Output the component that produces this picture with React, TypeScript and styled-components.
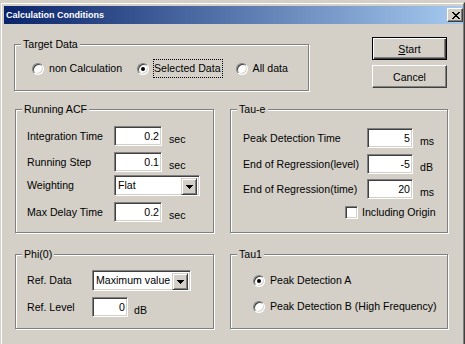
import React from "react";
import styled, { createGlobalStyle, css } from "styled-components";

const Global = createGlobalStyle`
  html, body {
    margin: 0;
    padding: 0;
    width: 465px;
    height: 344px;
    overflow: hidden;
    background: #d4d0c8;
  }
  body {
    font-family: "Liberation Sans", Arial, sans-serif;
    font-size: 10.6px;
    color: #000;
  }
`;

const Window = styled.div`
  box-sizing: border-box;
  margin-top: 2px;
  width: 465px;
  height: 342px;
  overflow: hidden;
  background: #d4d0c8;
  border-style: solid;
  border-width: 1px 1px 0 1px;
  border-color: #d4d0c8 #404040 #404040 #d4d0c8;
  display: flex;
  flex-direction: column;
`;

const WindowInner = styled.div`
  flex: 1;
  border-style: solid;
  border-width: 1px 1px 0 1px;
  border-color: #fff #808080 #808080 #fff;
  padding: 2px 0 0 2px;
  display: flex;
  flex-direction: column;
`;

const TitleBar = styled.div`
  height: 18px;
  flex: none;
  display: flex;
  align-items: center;
  justify-content: space-between;
  background: linear-gradient(to right, #0a246a, #a6caf0);
  color: #fff;
  padding: 0 0 0 2px;
`;

const TitleText = styled.span`
  font-weight: bold;
  font-size: 9px;
  white-space: nowrap;
`;

const CloseButton = styled.div`
  box-sizing: border-box;
  width: 16px;
  height: 14px;
  background: #d4d0c8;
  border: 1px solid;
  border-color: #fff #404040 #404040 #fff;
  box-shadow: inset -1px -1px #808080;
  display: flex;
  align-items: center;
  justify-content: center;
  padding-left: 1px;
`;

const Body = styled.div`
  display: flex;
  flex-direction: column;
  padding: 14px 0 0 11px;
`;

const Row = styled.div<{ $mt?: number }>`
  display: flex;
  align-items: flex-start;
  margin-top: ${(p) => p.$mt ?? 0}px;
`;

const GroupRow = styled(Row)`
  gap: 16px;
`;

const Group = styled.fieldset<{ $w: number; $ml?: number }>`
  box-sizing: border-box;
  width: ${(p) => p.$w}px;
  margin: 0 0 0 ${(p) => p.$ml ?? 0}px;
  padding: 0;
  min-width: 0;
  border: 1px solid #808080;
  box-shadow: inset 1px 1px #fff, 1px 1px #fff;
`;

const Legend = styled.legend`
  margin-left: 6px;
  padding: 0 2px;
  line-height: 13px;
  background: #d4d0c8;
`;

const GroupBody = styled.div<{ $pad: string }>`
  display: flex;
  flex-direction: column;
  padding: ${(p) => p.$pad};
`;

const RadioLine = styled.div<{ $gap?: number; $mt?: number }>`
  display: flex;
  align-items: center;
  gap: ${(p) => p.$gap ?? 15}px;
  margin-top: ${(p) => p.$mt ?? 0}px;
  line-height: 13px;
`;

const RadioOption = styled.label`
  display: flex;
  align-items: center;
  gap: 5px;
  white-space: nowrap;
`;

const RadioCircle = styled.span<{ $on?: boolean }>`
  box-sizing: border-box;
  position: relative;
  flex: none;
  width: 12px;
  height: 12px;
  border-radius: 50%;
  border: 1px solid;
  border-color: #808080 #fff #fff #808080;
  box-shadow: inset 1px 1px #404040, inset -1px -1px #d4d0c8;
  background: #fff;
  &::after {
    content: "";
    display: ${(p) => (p.$on ? "block" : "none")};
    position: absolute;
    left: 3px;
    top: 3px;
    width: 4px;
    height: 4px;
    border-radius: 50%;
    background: #000;
  }
`;

const OptionText = styled.span<{ $focus?: boolean }>`
  border: 1px dotted ${(p) => (p.$focus ? "#000" : "transparent")};
  padding: 2px 1px 2px 0;
  margin: -3px -2px -3px -1px;
`;

const ButtonCol = styled.div`
  display: flex;
  flex-direction: column;
  gap: 5px;
  margin: -1px 0 0 63px;
`;

const Button = styled.button<{ $default?: boolean }>`
  box-sizing: border-box;
  width: 75px;
  height: 23px;
  margin: 0;
  padding: 0;
  font: inherit;
  color: #000;
  background: #d4d0c8;
  border: 1px solid;
  ${(p) =>
    p.$default
      ? css`
          border-color: #000;
          box-shadow: inset 1px 1px #fff, inset -1px -1px #404040,
            inset -2px -2px #808080;
        `
      : css`
          border-color: #fff #404040 #404040 #fff;
          box-shadow: inset -1px -1px #808080;
        `}
`;

const FieldRow = styled.div<{ $mt?: number }>`
  display: flex;
  align-items: center;
  margin-top: ${(p) => p.$mt ?? 0}px;
  line-height: 13px;
`;

const FieldLabel = styled.span<{ $w: number }>`
  flex: none;
  width: ${(p) => p.$w}px;
  white-space: nowrap;
`;

const sunken = css`
  box-sizing: border-box;
  border: 1px solid;
  border-color: #808080 #fff #fff #808080;
  box-shadow: inset 1px 1px #404040, inset -1px -1px #d4d0c8;
  background: #fff;
`;

const TextBox = styled.input<{ $w: number }>`
  ${sunken};
  flex: none;
  width: ${(p) => p.$w}px;
  height: 20px;
  margin: 0;
  padding: 0 2px 0 0;
  font: inherit;
  color: #000;
  text-align: right;
  outline: none;
`;

const Unit = styled.span<{ $ml: number }>`
  align-self: flex-end;
  margin-left: ${(p) => p.$ml}px;
  white-space: nowrap;
`;

const Combo = styled.div<{ $w: number }>`
  ${sunken};
  flex: none;
  width: ${(p) => p.$w}px;
  height: 21px;
  padding: 2px;
  display: flex;
  align-items: stretch;
`;

const ComboText = styled.span`
  flex: 1;
  padding-left: 1px;
  display: flex;
  align-items: center;
  white-space: nowrap;
`;

const DropButton = styled.span`
  box-sizing: border-box;
  flex: none;
  width: 16px;
  height: 17px;
  background: #d4d0c8;
  border: 1px solid;
  border-color: #d4d0c8 #404040 #404040 #d4d0c8;
  box-shadow: inset 1px 1px #fff, inset -1px -1px #808080;
  display: flex;
  align-items: center;
  justify-content: center;
`;

const CheckLine = styled.label<{ $ml: number; $mt: number }>`
  display: flex;
  align-items: center;
  gap: 4px;
  margin: ${(p) => p.$mt}px 0 0 ${(p) => p.$ml}px;
  line-height: 13px;
  white-space: nowrap;
`;

const CheckBox = styled.span`
  ${sunken};
  flex: none;
  width: 13px;
  height: 13px;
`;

const Arrow = () => (
  <svg width="7" height="4" viewBox="0 0 7 4" shapeRendering="crispEdges">
    <path d="M0 0h7v1h-1v1h-1v1h-1v1h-1v-1h-1v-1h-1v-1h-1z" fill="#000" />
  </svg>
);

const CloseGlyph = () => (
  <svg width="8" height="7" viewBox="0 0 8 7" shapeRendering="crispEdges">
    <path
      d="M0 0h2v1h-2zM6 0h2v1h-2zM1 1h2v1h-2zM5 1h2v1h-2zM2 2h4v1h-4zM3 3h2v1h-2zM2 4h4v1h-4zM1 5h2v1h-2zM5 5h2v1h-2zM0 6h2v1h-2zM6 6h2v1h-2z"
      fill="#000"
    />
  </svg>
);

export default function App() {
  return (
    <>
      <Global />
      <Window>
        <WindowInner>
          <TitleBar>
            <TitleText>Calculation Conditions</TitleText>
            <CloseButton>
              <CloseGlyph />
            </CloseButton>
          </TitleBar>
          <Body>
            <Row>
              <Group $w={295} $ml={-1}>
                <Legend>Target Data</Legend>
                <GroupBody $pad="11px 0 15px 17px">
                  <RadioLine>
                    <RadioOption>
                      <RadioCircle />
                      <OptionText>non Calculation</OptionText>
                    </RadioOption>
                    <RadioOption>
                      <RadioCircle $on />
                      <OptionText $focus>Selected Data</OptionText>
                    </RadioOption>
                    <RadioOption>
                      <RadioCircle />
                      <OptionText>All data</OptionText>
                    </RadioOption>
                  </RadioLine>
                </GroupBody>
              </Group>
              <ButtonCol>
                <Button $default>
                  <u>S</u>tart
                </Button>
                <Button>Cancel</Button>
              </ButtonCol>
            </Row>

            <GroupRow $mt={12}>
              <Group $w={199}>
                <Legend>Running ACF</Legend>
                <GroupBody $pad="10px 0 10px 11px">
                  <FieldRow>
                    <FieldLabel $w={87}>Integration Time</FieldLabel>
                    <TextBox $w={48} readOnly value="0.2" />
                    <Unit $ml={7}>sec</Unit>
                  </FieldRow>
                  <FieldRow $mt={6}>
                    <FieldLabel $w={87}>Running Step</FieldLabel>
                    <TextBox $w={48} readOnly value="0.1" />
                    <Unit $ml={7}>sec</Unit>
                  </FieldRow>
                  <FieldRow $mt={3}>
                    <FieldLabel $w={87}>Weighting</FieldLabel>
                    <Combo $w={86}>
                      <ComboText>Flat</ComboText>
                      <DropButton>
                        <Arrow />
                      </DropButton>
                    </Combo>
                  </FieldRow>
                  <FieldRow $mt={6}>
                    <FieldLabel $w={87}>Max Delay Time</FieldLabel>
                    <TextBox $w={48} readOnly value="0.2" />
                    <Unit $ml={7}>sec</Unit>
                  </FieldRow>
                </GroupBody>
              </Group>
              <Group $w={218}>
                <Legend>Tau-e</Legend>
                <GroupBody $pad="12px 0 13px 12px">
                  <FieldRow>
                    <FieldLabel $w={124}>Peak Detection Time</FieldLabel>
                    <TextBox $w={46} readOnly value="5" />
                    <Unit $ml={7}>ms</Unit>
                  </FieldRow>
                  <FieldRow $mt={6}>
                    <FieldLabel $w={124}>End of Regression(level)</FieldLabel>
                    <TextBox $w={46} readOnly value="-5" />
                    <Unit $ml={7}>dB</Unit>
                  </FieldRow>
                  <FieldRow $mt={5}>
                    <FieldLabel $w={124}>End of Regression(time)</FieldLabel>
                    <TextBox $w={46} readOnly value="20" />
                    <Unit $ml={7}>ms</Unit>
                  </FieldRow>
                  <CheckLine $ml={102} $mt={7}>
                    <CheckBox />
                    <span>Including Origin</span>
                  </CheckLine>
                </GroupBody>
              </Group>
            </GroupRow>

            <GroupRow $mt={15}>
              <Group $w={199}>
                <Legend>Phi(0)</Legend>
                <GroupBody $pad="9px 0 11px 11px">
                  <FieldRow>
                    <FieldLabel $w={65}>Ref. Data</FieldLabel>
                    <Combo $w={99}>
                      <ComboText>Maximum value</ComboText>
                      <DropButton>
                        <Arrow />
                      </DropButton>
                    </Combo>
                  </FieldRow>
                  <FieldRow $mt={6}>
                    <FieldLabel $w={65}>Ref. Level</FieldLabel>
                    <TextBox $w={36} readOnly value="0" />
                    <Unit $ml={6}>dB</Unit>
                  </FieldRow>
                </GroupBody>
              </Group>
              <Group $w={218}>
                <Legend>Tau1</Legend>
                <GroupBody $pad="13px 0 15px 22px">
                  <RadioLine>
                    <RadioOption>
                      <RadioCircle $on />
                      <OptionText>Peak Detection A</OptionText>
                    </RadioOption>
                  </RadioLine>
                  <RadioLine $mt={13}>
                    <RadioOption>
                      <RadioCircle />
                      <OptionText>Peak Detection B (High Frequency)</OptionText>
                    </RadioOption>
                  </RadioLine>
                </GroupBody>
              </Group>
            </GroupRow>
          </Body>
        </WindowInner>
      </Window>
    </>
  );
}
